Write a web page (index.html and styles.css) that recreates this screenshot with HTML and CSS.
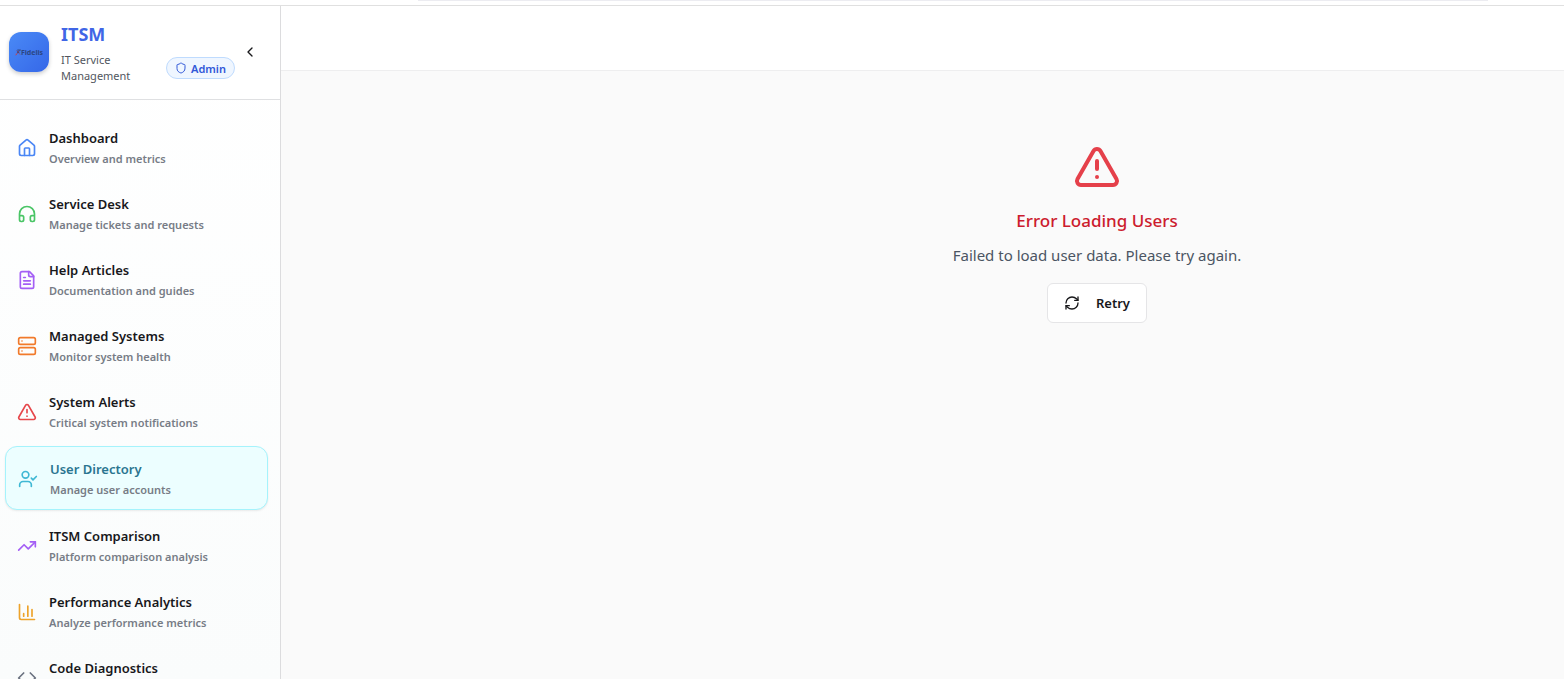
FILE: index.html
```html
<!DOCTYPE html>
<html lang="en">
<head>
<meta charset="utf-8">
<meta name="viewport" content="width=device-width, initial-scale=1">
<title>ITSM - User Directory</title>
<link rel="stylesheet" href="styles.css">
</head>
<body>
<div class="top-strip"><div class="top-strip-line"></div></div>
<div class="app">
  <aside class="sidebar">
    <header class="brand">
      <div class="logo">
        <svg class="logo-mark" viewBox="0 0 8 10" aria-hidden="true"><path d="M1 9 L6 2 M2 2 L7 8" stroke="#8a4a70" stroke-width="1.2"/><path d="M3 1.5H8M2.5 4.5H6" stroke="#2b3a68" stroke-width="1.2"/><circle cx="1.5" cy="7.5" r="1" fill="#c24b5c"/></svg><span>Fidelis</span>
      </div>
      <div class="brand-text">
        <h1 class="brand-title">ITSM</h1>
        <div class="brand-row">
          <p class="brand-sub">IT Service Management</p>
          <span class="badge"><svg class="icon badge-icon" viewBox="0 0 24 24" aria-hidden="true"><path d="M20 13c0 5-3.500 7.500-7.660 8.950a1 1 0 0 1-.67-.01C7.500 20.500 4 18 4 13V6a1 1 0 0 1 1-1c2 0 4.500-1.200 6.240-2.720a1.170 1.170 0 0 1 1.520 0C14.510 3.810 17 5 19 5a1 1 0 0 1 1 1z"/></svg>Admin</span>
        </div>
      </div>
      <button class="collapse" type="button" aria-label="Collapse sidebar"><svg class="icon collapse-icon" viewBox="0 0 24 24"><path d="m15 18-6-6 6-6"/></svg></button>
    </header>
    <nav class="nav" aria-label="Main">
      <a class="item" href="#dashboard">
        <svg class="icon item-icon blue" viewBox="0 0 24 24" aria-hidden="true"><path d="M15 21v-8a1 1 0 0 0-1-1h-4a1 1 0 0 0-1 1v8"/><path d="M3 10a2 2 0 0 1 .709-1.528l7-5.999a2 2 0 0 1 2.582 0l7 5.999A2 2 0 0 1 21 10v9a2 2 0 0 1-2 2H5a2 2 0 0 1-2-2z"/></svg>
        <span class="item-text"><span class="item-title">Dashboard</span><span class="item-desc">Overview and metrics</span></span>
      </a>
      <a class="item" href="#service-desk">
        <svg class="icon item-icon green" viewBox="0 0 24 24" aria-hidden="true"><path d="M3 14h3a2 2 0 0 1 2 2v3a2 2 0 0 1-2 2H5a2 2 0 0 1-2-2v-7a9 9 0 0 1 18 0v7a2 2 0 0 1-2 2h-1a2 2 0 0 1-2-2v-3a2 2 0 0 1 2-2h3"/></svg>
        <span class="item-text"><span class="item-title">Service Desk</span><span class="item-desc">Manage tickets and requests</span></span>
      </a>
      <a class="item" href="#help">
        <svg class="icon item-icon purple" viewBox="0 0 24 24" aria-hidden="true"><path d="M15 2H6a2 2 0 0 0-2 2v16a2 2 0 0 0 2 2h12a2 2 0 0 0 2-2V7Z"/><path d="M14 2v4a2 2 0 0 0 2 2h4"/><path d="M10 9H8"/><path d="M16 13H8"/><path d="M16 17H8"/></svg>
        <span class="item-text"><span class="item-title">Help Articles</span><span class="item-desc">Documentation and guides</span></span>
      </a>
      <a class="item" href="#systems">
        <svg class="icon item-icon orange" viewBox="0 0 24 24" aria-hidden="true"><rect width="20" height="8" x="2" y="2" rx="2"/><rect width="20" height="8" x="2" y="14" rx="2"/><path d="M6 6h.01M6 18h.01"/></svg>
        <span class="item-text"><span class="item-title">Managed Systems</span><span class="item-desc">Monitor system health</span></span>
      </a>
      <a class="item" href="#alerts">
        <svg class="icon item-icon red" viewBox="0 0 24 24" aria-hidden="true"><path d="m21.730 18-8-14a2 2 0 0 0-3.480 0l-8 14A2 2 0 0 0 4 21h16a2 2 0 0 0 1.730-3"/><path d="M12 9v4M12 17h.01"/></svg>
        <span class="item-text"><span class="item-title">System Alerts</span><span class="item-desc">Critical system notifications</span></span>
      </a>
      <a class="item item-active" href="#users" aria-current="page">
        <svg class="icon item-icon cyan" viewBox="0 0 24 24" aria-hidden="true"><path d="M16 21v-2a4 4 0 0 0-4-4H6a4 4 0 0 0-4 4v2"/><circle cx="9" cy="7" r="4"/><path d="m16 11 2 2 4-4"/></svg>
        <span class="item-text"><span class="item-title">User Directory</span><span class="item-desc">Manage user accounts</span></span>
      </a>
      <a class="item" href="#comparison">
        <svg class="icon item-icon purple" viewBox="0 0 24 24" aria-hidden="true"><path d="m22 7-8.500 8.500-5-5L2 17"/><path d="M16 7h6v6"/></svg>
        <span class="item-text"><span class="item-title">ITSM Comparison</span><span class="item-desc">Platform comparison analysis</span></span>
      </a>
      <a class="item" href="#analytics">
        <svg class="icon item-icon amber" viewBox="0 0 24 24" aria-hidden="true"><path d="M3 3v16a2 2 0 0 0 2 2h16"/><path d="M18 17V9M13 17V5M8 17v-3"/></svg>
        <span class="item-text"><span class="item-title">Performance Analytics</span><span class="item-desc">Analyze performance metrics</span></span>
      </a>
      <a class="item" href="#diagnostics">
        <svg class="icon item-icon gray" viewBox="0 0 24 24" aria-hidden="true"><path d="m16 18 6-6-6-6"/><path d="m8 6-6 6 6 6"/></svg>
        <span class="item-text"><span class="item-title">Code Diagnostics</span><span class="item-desc">&nbsp;</span></span>
      </a>
    </nav>
  </aside>
  <div class="content">
    <div class="topbar"></div>
    <main class="main">
      <section class="error" role="alert">
        <svg class="icon error-icon" viewBox="0 0 24 24" aria-hidden="true"><path d="m21.730 18-8-14a2 2 0 0 0-3.480 0l-8 14A2 2 0 0 0 4 21h16a2 2 0 0 0 1.730-3"/><path d="M12 9v4M12 17h.01"/></svg>
        <h2 class="error-title">Error Loading Users</h2>
        <p class="error-text">Failed to load user data. Please try again.</p>
        <button class="retry" type="button"><svg class="icon retry-icon" viewBox="0 0 24 24" aria-hidden="true"><path d="M3 12a9 9 0 0 1 9-9 9.750 9.750 0 0 1 6.740 2.740L21 8"/><path d="M21 3v5h-5"/><path d="M21 12a9 9 0 0 1-9 9 9.750 9.750 0 0 1-6.740-2.740L3 16"/><path d="M8 16H3v5"/></svg>Retry</button>
      </section>
    </main>
  </div>
</div>
</body>
</html>
```
FILE: styles.css
```css
* { box-sizing: border-box; }

body {
  margin: 0;
  height: 100vh;
  overflow: hidden;
  display: flex;
  flex-direction: column;
  background: #fff;
  color: #18181b;
  font-family: "Segoe UI", "Noto Sans", sans-serif;
}

h1, h2, p { margin: 0; }

.icon {
  fill: none;
  stroke: currentColor;
  stroke-width: 2;
  stroke-linecap: round;
  stroke-linejoin: round;
  flex: none;
}

.top-strip {
  flex: none;
  height: 6px;
  padding: 0 76px 0 418px;
  border-bottom: 1px solid #e0e0e0;
}
.top-strip-line { height: 1px; background: #ececf1; }

.app { flex: 1; min-height: 0; display: flex; }

.sidebar {
  flex: none;
  width: 281px;
  overflow-y: auto;
  scrollbar-width: none;
  border-right: 1px solid #dcdcde;
  background: linear-gradient(#fff, #fafcfc);
}

.brand {
  display: flex;
  align-items: center;
  padding: 14px 22px 15px 9px;
  border-bottom: 1px solid #dfe0e2;
  background: #fff;
}
.logo {
  flex: none;
  width: 40px;
  height: 40px;
  margin-right: 12px;
  display: flex;
  align-items: center;
  justify-content: center;
  border-radius: 12px;
  background: linear-gradient(135deg, #4a8af6, #3567e8);
  box-shadow: 0 2px 4px rgb(0 0 0 / 20%);
  color: #2c4683;
  font-size: 7px;
  font-weight: 700;
}
.logo-mark { width: 6px; height: 7px; }
.brand-text { flex: 1; }
.brand-title {
  font-size: 18px;
  line-height: 28px;
  font-weight: 700;
  color: #4066e6;
}
.brand-row {
  display: flex;
  align-items: center;
  justify-content: space-between;
  padding-top: 4px;
}
.brand-sub {
  width: 80px;
  font-size: 11px;
  line-height: 16px;
  color: #52565e;
}
.badge {
  display: flex;
  align-items: center;
  gap: 4px;
  height: 22px;
  padding: 0 8px;
  border: 1px solid #bfdbfe;
  border-radius: 11px;
  background: #eff6ff;
  color: #3158d8;
  font-size: 11px;
  font-weight: 600;
}
.badge-icon { width: 12px; height: 12px; }
.collapse {
  display: flex;
  margin-left: 7px;
  padding: 0;
  border: 0;
  background: none;
  color: #18181b;
}
.collapse-icon { width: 16px; height: 16px; }

.nav {
  display: flex;
  flex-direction: column;
  gap: 4px;
  padding: 16px 12px 16px 5px;
}
.item {
  display: flex;
  align-items: center;
  gap: 12px;
  padding: 12px 12px 11px;
  border-radius: 12px;
  color: #18181b;
  text-decoration: none;
}
.item-active {
  border: 1px solid #a5f3fc;
  background: #ecfeff;
  box-shadow: 0 1px 2px rgb(0 0 0 / 8%);
  color: #2a7590;
}
.item-icon { width: 20px; height: 20px; }
.item-text { display: flex; flex-direction: column; gap: 3px; }
.item-title { font-size: 13px; line-height: 20px; font-weight: 600; }
.item-desc {
  font-size: 11px;
  line-height: 16px;
  font-weight: 600;
  color: #777c86;
}

.blue { color: #4a86f5; }
.green { color: #4ac566; }
.purple { color: #a45ff5; }
.orange { color: #f17a2b; }
.red { color: #e6474b; }
.cyan { color: #3fb8d4; }
.amber { color: #eda32b; }
.gray { color: #6b7280; }

.content {
  flex: 1;
  min-width: 0;
  display: flex;
  flex-direction: column;
}
.topbar { height: 65px; border-bottom: 1px solid #eeeeef; background: #fff; }
.main {
  flex: 1;
  padding: 72px 0 0 349px;
  background: #fafafa;
}
.error { display: flex; flex-direction: column; align-items: center; }
.error-icon { width: 48px; height: 48px; color: #e5404a; }
.error-title {
  margin-top: 16px;
  font-size: 17px;
  line-height: 28px;
  font-weight: 500;
  color: #cc1c2e;
}
.error-text {
  margin-top: 8px;
  font-size: 15px;
  line-height: 24px;
  color: #4b5563;
}
.retry {
  display: flex;
  align-items: center;
  gap: 16px;
  height: 40px;
  margin-top: 16px;
  padding: 0 16px;
  border: 1px solid #e5e5e7;
  border-radius: 6px;
  background: #fff;
  color: #18181b;
  font: 600 13px/20px "Segoe UI", "Noto Sans", sans-serif;
}
.retry-icon { width: 16px; height: 16px; }
```
